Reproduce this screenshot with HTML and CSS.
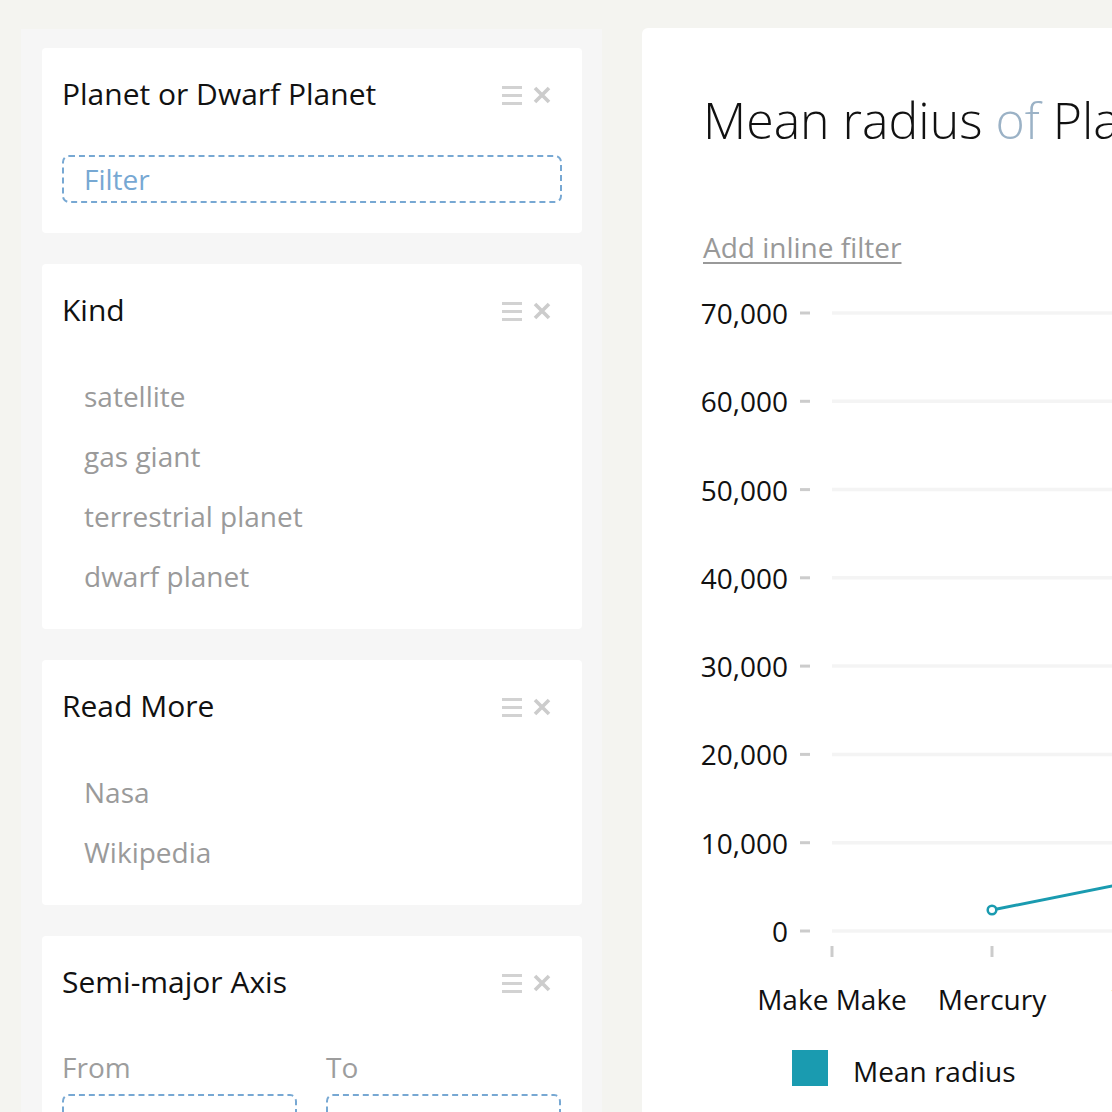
FILE: index.html
```html
<!DOCTYPE html>
<html>
<head>
<meta charset="utf-8">
<link rel="stylesheet" href="styles.css">
</head>
<body>
<div class="page">
  <aside class="sidebar">
    <section class="card">
      <header class="card-head">
        <h2 class="card-title">Planet or Dwarf Planet</h2>
        <div class="card-tools">
          <span class="tool-menu"><i></i><i></i><i></i></span>
          <svg class="tool-close" width="20" height="20" viewBox="0 0 20 20"><path d="M3 3L17 17M17 3L3 17" stroke="#cccccc" stroke-width="3.6" stroke-linecap="butt"/></svg>
        </div>
      </header>
      <div class="filter-box">Filter</div>
    </section>

    <section class="card">
      <header class="card-head">
        <h2 class="card-title">Kind</h2>
        <div class="card-tools">
          <span class="tool-menu"><i></i><i></i><i></i></span>
          <svg class="tool-close" width="20" height="20" viewBox="0 0 20 20"><path d="M3 3L17 17M17 3L3 17" stroke="#cccccc" stroke-width="3.6"/></svg>
        </div>
      </header>
      <ul class="option-list">
        <li>satellite</li>
        <li>gas giant</li>
        <li>terrestrial planet</li>
        <li>dwarf planet</li>
      </ul>
    </section>

    <section class="card">
      <header class="card-head">
        <h2 class="card-title">Read More</h2>
        <div class="card-tools">
          <span class="tool-menu"><i></i><i></i><i></i></span>
          <svg class="tool-close" width="20" height="20" viewBox="0 0 20 20"><path d="M3 3L17 17M17 3L3 17" stroke="#cccccc" stroke-width="3.6"/></svg>
        </div>
      </header>
      <ul class="option-list">
        <li>Nasa</li>
        <li>Wikipedia</li>
      </ul>
    </section>

    <section class="card">
      <header class="card-head">
        <h2 class="card-title">Semi-major Axis</h2>
        <div class="card-tools">
          <span class="tool-menu"><i></i><i></i><i></i></span>
          <svg class="tool-close" width="20" height="20" viewBox="0 0 20 20"><path d="M3 3L17 17M17 3L3 17" stroke="#cccccc" stroke-width="3.6"/></svg>
        </div>
      </header>
      <div class="range">
        <div class="range-field">
          <div class="range-label">From</div>
          <div class="range-input"></div>
        </div>
        <div class="range-field">
          <div class="range-label">To</div>
          <div class="range-input"></div>
        </div>
      </div>
    </section>
  </aside>

  <main class="chart-card">
    <h1 class="chart-title">Mean radius <span class="of">of</span> Planets and Dwarf Planets</h1>
    <a class="inline-filter">Add inline filter</a>
    <svg class="chart" width="700" height="840" viewBox="0 0 700 840">
      <g class="grid">
        <line x1="129" y1="33" x2="700" y2="33"/>
        <line x1="129" y1="121.3" x2="700" y2="121.3"/>
        <line x1="129" y1="209.6" x2="700" y2="209.6"/>
        <line x1="129" y1="297.8" x2="700" y2="297.8"/>
        <line x1="129" y1="386.1" x2="700" y2="386.1"/>
        <line x1="129" y1="474.4" x2="700" y2="474.4"/>
        <line x1="129" y1="562.7" x2="700" y2="562.7"/>
        <line x1="129" y1="651" x2="700" y2="651"/>
      </g>
      <g class="ticks">
        <line x1="97" y1="33" x2="107" y2="33"/>
        <line x1="97" y1="121.3" x2="107" y2="121.3"/>
        <line x1="97" y1="209.6" x2="107" y2="209.6"/>
        <line x1="97" y1="297.8" x2="107" y2="297.8"/>
        <line x1="97" y1="386.1" x2="107" y2="386.1"/>
        <line x1="97" y1="474.4" x2="107" y2="474.4"/>
        <line x1="97" y1="562.7" x2="107" y2="562.7"/>
        <line x1="97" y1="651" x2="107" y2="651"/>
        <line x1="129" y1="666" x2="129" y2="677"/>
        <line x1="289" y1="666" x2="289" y2="677"/>
        <line x1="449" y1="666" x2="449" y2="677"/>
      </g>
      <g class="ylabels">
        <text x="85" y="33">70,000</text>
        <text x="85" y="121.3">60,000</text>
        <text x="85" y="209.6">50,000</text>
        <text x="85" y="297.8">40,000</text>
        <text x="85" y="386.1">30,000</text>
        <text x="85" y="474.4">20,000</text>
        <text x="85" y="562.7">10,000</text>
        <text x="85" y="651">0</text>
      </g>
      <g class="xlabels">
        <text x="129" y="719">Make Make</text>
        <text x="289" y="719">Mercury</text>
        <text x="449" y="719">Venus</text>
      </g>
      <polyline class="series" points="289,630 449,598"/>
      <circle class="point" cx="289" cy="630" r="4.3"/>
      <rect class="legend-swatch" x="89" y="770" width="36" height="36"/>
      <text class="legend-text" x="150" y="791">Mean radius</text>
    </svg>
  </main>
</div>
</body>
</html>
```

FILE: styles.css
```css
* { box-sizing: border-box; }

html, body {
  margin: 0;
  padding: 0;
  width: 1112px;
  height: 1112px;
  overflow: hidden;
  background: #f4f4f0;
  font-family: "Open Sans", "Noto Sans", sans-serif;
  color: #111;
}

.page {
  display: flex;
  align-items: flex-start;
  padding-top: 28px;
  width: 1700px;
}

.sidebar {
  width: 581px;
  margin-left: 21px;
  margin-top: 1px;
  min-height: 1200px;
  background: #f6f6f6;
  padding: 19px 20px 0 21px;
  display: flex;
  flex-direction: column;
  gap: 31px;
  flex-shrink: 0;
}

.card {
  background: #ffffff;
  border-radius: 4px;
  padding: 30px 20px 23px 20px;
}

.card-head {
  display: flex;
  align-items: center;
  justify-content: space-between;
  height: 34px;
}

.card-title {
  margin: 0;
  font-size: 30px;
  line-height: 34px;
  font-weight: 400;
  color: #111;
  position: relative;
  top: -1px;
}

.card-tools {
  display: flex;
  align-items: center;
  gap: 10px;
  margin-right: 10px;
}

.tool-menu {
  display: flex;
  flex-direction: column;
  gap: 5px;
  width: 20px;
}

.tool-menu i {
  display: block;
  height: 3px;
  background: #d2d2d2;
}

.tool-close { display: block; }

.filter-box {
  margin-top: 43px;
  margin-bottom: 7px;
  height: 48px;
  border: 2px dashed #77a8d3;
  border-radius: 7px;
  padding-left: 20px;
  font-size: 28px;
  line-height: 44px;
  color: #77a8d3;
}

.option-list {
  list-style: none;
  margin: 38px 0 0 0;
  padding: 0 0 0 22px;
}

.option-list li {
  font-size: 28px;
  line-height: 60px;
  height: 60px;
  color: #9a9a9a;
}

.range {
  display: flex;
  gap: 29px;
  margin-top: 50px;
}

.range-field {
  flex: 0 0 235px;
}

.range-label {
  font-size: 28px;
  line-height: 34px;
  color: #9d9d9d;
}

.range-input {
  margin-top: 10px;
  height: 48px;
  border: 2px dashed #77a8d3;
  border-radius: 7px;
}

.chart-card {
  margin-left: 40px;
  width: 900px;
  min-height: 1200px;
  background: #ffffff;
  border-radius: 6px;
  padding: 62px 0 0 61px;
  flex-shrink: 0;
}

.chart-title {
  margin: 0;
  font-size: 50px;
  line-height: 60px;
  font-weight: 300;
  color: #111;
  white-space: nowrap;
}

.chart-title .of { color: #9bb2c6; }

.inline-filter {
  display: inline-block;
  margin-top: 80px;
  font-size: 28px;
  line-height: 34px;
  color: #999;
  text-decoration: underline;
  text-underline-offset: 4px;
  text-decoration-thickness: 2px;
}

.chart {
  display: block;
  margin-top: 16px;
  overflow: visible;
}

.chart text {
  font-family: "Open Sans", "Noto Sans", sans-serif;
  font-size: 28px;
  fill: #111;
  dominant-baseline: central;
}

.grid line { stroke: #f4f4f4; stroke-width: 3.5; }
.ticks line { stroke: #cccccc; stroke-width: 3; }
.ylabels text { text-anchor: end; }
.xlabels text { text-anchor: middle; }
.series { fill: none; stroke: #1a9bb0; stroke-width: 3; }
.point { fill: #ffffff; stroke: #1a9bb0; stroke-width: 2.5; }
.legend-swatch { fill: #1a9bb0; }
.legend-text { text-anchor: start; }
```
